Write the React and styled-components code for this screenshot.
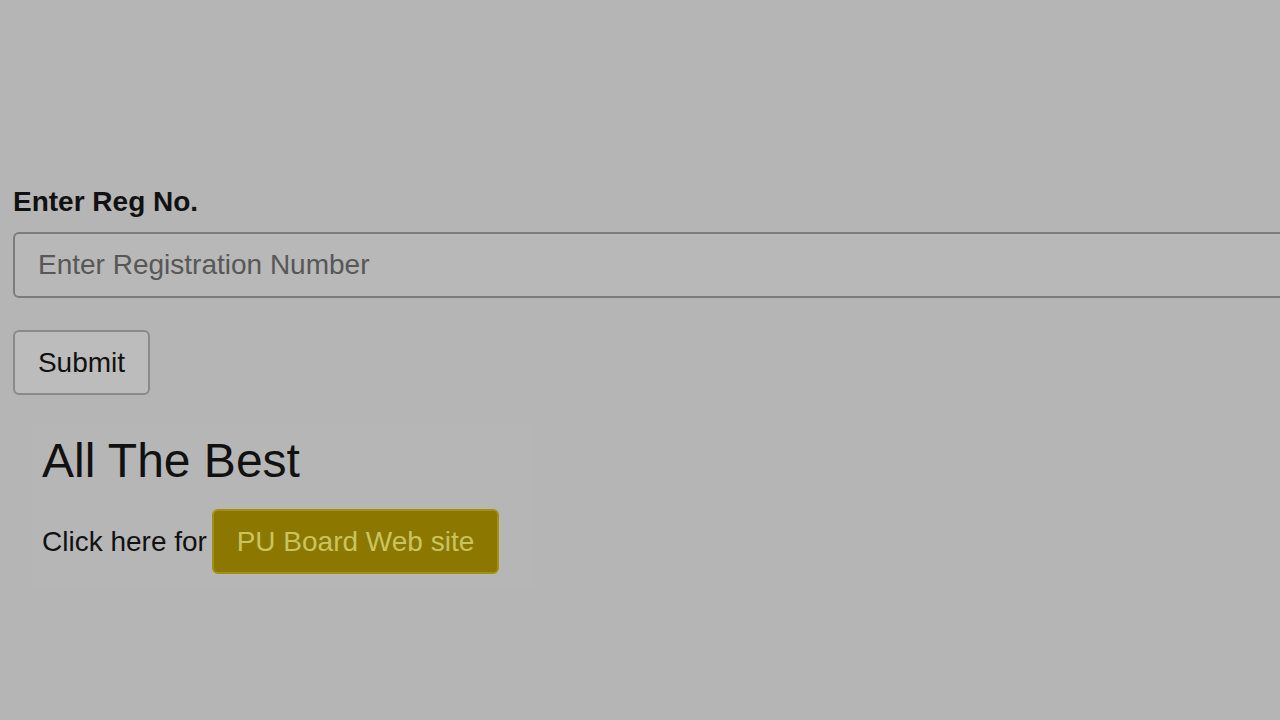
import styled, { createGlobalStyle } from "styled-components"

const GlobalStyle = createGlobalStyle`
  html, body {
    margin: 0;
    padding: 0;
    background: #b5b5b5;
    overflow: hidden;
    font-family: "Liberation Sans", Arial, sans-serif;
  }
`

const Page = styled.div`
  width: 1280px;
  height: 720px;
  background: #b5b5b5;
  padding: 184px 0 0 13px;
  box-sizing: border-box;
  display: flex;
  flex-direction: column;
`

const Label = styled.label`
  font-size: 28px;
  font-weight: bold;
  color: #111;
  line-height: 36px;
  margin-bottom: 12px;
`

const RegInput = styled.input`
  width: 1300px;
  height: 66px;
  box-sizing: border-box;
  border: 2px solid #7c7c7c;
  border-radius: 6px;
  background: #b8b8b8;
  padding: 0 23px;
  font-family: inherit;
  font-size: 28px;
  color: #333;
  outline: none;
  &::placeholder {
    color: #575757;
  }
`

const SubmitButton = styled.button`
  align-self: flex-start;
  margin-top: 32px;
  width: 137px;
  height: 65px;
  padding: 0;
  border: 2px solid #8a8a8a;
  border-radius: 6px;
  background: #bcbcbc;
  font-family: inherit;
  font-size: 28px;
  color: #111;
`

const Panel = styled.div`
  margin: 30px 0 0 18px;
  padding: 8px 11px 14px;
  width: 480px;
  background: #b6b6b6;
  display: flex;
  flex-direction: column;
`

const Heading = styled.h2`
  margin: 0;
  font-size: 48px;
  font-weight: normal;
  color: #111;
  line-height: 56px;
`

const Row = styled.div`
  display: flex;
  align-items: center;
  gap: 5px;
  margin-top: 20px;
  font-size: 28px;
  color: #111;
`

const SiteLink = styled.a`
  display: flex;
  align-items: center;
  justify-content: center;
  width: 287px;
  height: 65px;
  box-sizing: border-box;
  border: 2px solid #a39012;
  border-radius: 6px;
  background: #8c7700;
  color: #c8c45e;
  font-size: 28px;
  text-decoration: none;
`

export default function App() {
  return (
    <>
      <GlobalStyle />
      <Page>
        <Label htmlFor="reg">Enter Reg No.</Label>
        <RegInput id="reg" type="text" placeholder="Enter Registration Number" />
        <SubmitButton>Submit</SubmitButton>
        <Panel>
          <Heading>All The Best</Heading>
          <Row>
            <span>Click here for</span>
            <SiteLink href="#">PU Board Web site</SiteLink>
          </Row>
        </Panel>
      </Page>
    </>
  )
}
